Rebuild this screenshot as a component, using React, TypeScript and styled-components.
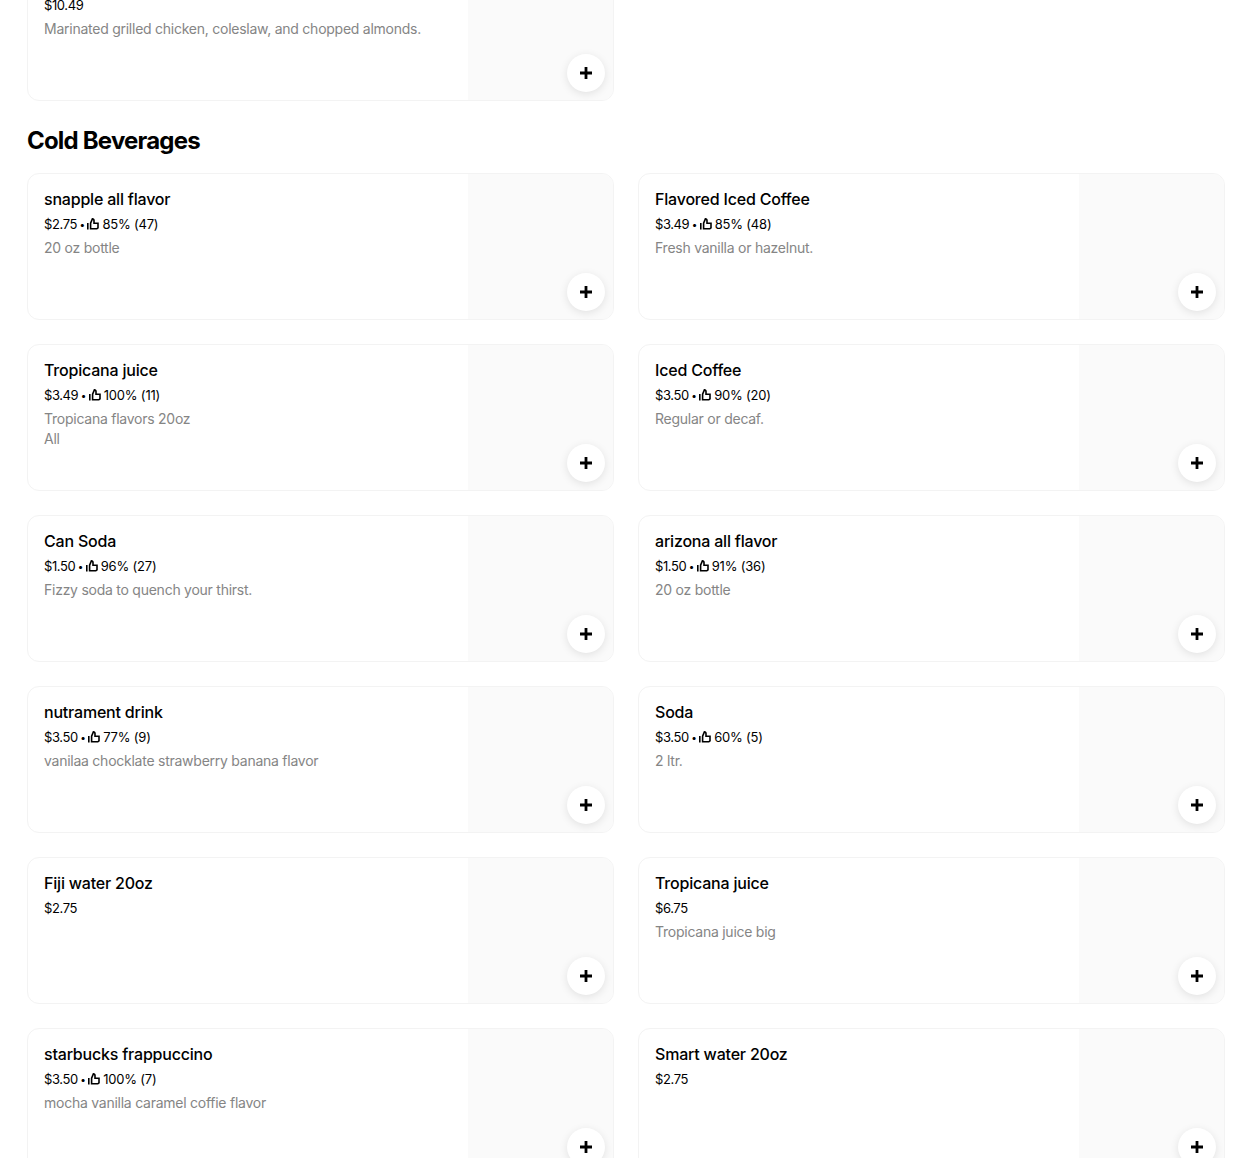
import styled, { createGlobalStyle } from 'styled-components';

type MenuItem = {
    name: string;
    price: string;
    rating?: string;
    description?: string[];
};

const COLD_BEVERAGES: MenuItem[] = [
    { name: 'snapple all flavor', price: '$2.75', rating: '85% (47)', description: ['20 oz bottle'] },
    { name: 'Flavored Iced Coffee', price: '$3.49', rating: '85% (48)', description: ['Fresh vanilla or hazelnut.'] },
    { name: 'Tropicana juice', price: '$3.49', rating: '100% (11)', description: ['Tropicana flavors 20oz', 'All'] },
    { name: 'Iced Coffee', price: '$3.50', rating: '90% (20)', description: ['Regular or decaf.'] },
    { name: 'Can Soda', price: '$1.50', rating: '96% (27)', description: ['Fizzy soda to quench your thirst.'] },
    { name: 'arizona all flavor', price: '$1.50', rating: '91% (36)', description: ['20 oz bottle'] },
    { name: 'nutrament drink', price: '$3.50', rating: '77% (9)', description: ['vanilaa chocklate strawberry banana flavor'] },
    { name: 'Soda', price: '$3.50', rating: '60% (5)', description: ['2 ltr.'] },
    { name: 'Fiji water 20oz', price: '$2.75' },
    { name: 'Tropicana juice', price: '$6.75', description: ['Tropicana juice big'] },
    { name: 'starbucks frappuccino', price: '$3.50', rating: '100% (7)', description: ['mocha vanilla caramel coffie flavor'] },
    { name: 'Smart water 20oz', price: '$2.75' },
];

const PREVIOUS_ITEM: MenuItem = {
    name: 'Grilled Chicken Salad',
    price: '$10.49',
    description: ['Marinated grilled chicken, coleslaw, and chopped almonds.'],
};

const GlobalStyle = createGlobalStyle`
    html, body {
        margin: 0;
        height: 1158px;
        overflow: hidden;
        background: #fff;
        font-family: Inter, "Liberation Sans", sans-serif;
    }
`;

/* page is scrolled, so the first card starts above the window */
const Page = styled.main`
    margin-top: -46px;
    padding: 0 25px 0 27px;
`;

const Grid = styled.div`
    display: grid;
    grid-template-columns: repeat(2, 587px);
    gap: 24px;
`;

const Heading = styled.h2`
    margin: 24px 0 16px;
    font-size: 24px;
    line-height: 32px;
    font-weight: 700;
    letter-spacing: -0.8px;
    color: #000;
`;

const Card = styled.article`
    display: flex;
    height: 147px;
    box-sizing: border-box;
    border: 1px solid #f3f3f3;
    border-radius: 12px;
    overflow: hidden;
`;

const Details = styled.div`
    flex: 1;
    min-width: 0;
    padding: 15px 16px 0;
`;

const Name = styled.div`
    font-size: 16px;
    line-height: 20px;
    font-weight: 500;
    letter-spacing: -0.2px;
    color: #000;
`;

const Meta = styled.div`
    display: flex;
    align-items: center;
    margin-top: 5px;
    font-size: 13px;
    line-height: 20px;
    letter-spacing: -0.2px;
    color: #000;
`;

const Price = styled.span`
    letter-spacing: -0.4px;
`;

const Dot = styled.span`
    margin: 0 2.5px;
    font-size: 10px;
`;

const ThumbIcon = styled.svg`
    width: 12px;
    height: 12px;
    margin-right: 3px;
`;

const Description = styled.div`
    margin-top: 4px;
    font-size: 14px;
    line-height: 20px;
    letter-spacing: -0.25px;
    color: #858585;
`;

const Thumb = styled.div`
    position: relative;
    flex: none;
    width: 145px;
    background: #fafafa;
`;

const AddButton = styled.button`
    position: absolute;
    right: 8px;
    bottom: 8px;
    display: flex;
    align-items: center;
    justify-content: center;
    width: 38px;
    height: 38px;
    padding: 0;
    border: 0;
    border-radius: 50%;
    background: #fff;
    box-shadow: 0 2px 8px rgba(0, 0, 0, 0.1);
    cursor: pointer;
`;

const PlusIcon = styled.svg`
    width: 14px;
    height: 14px;
`;

const ItemCard: React.FC<{ item: MenuItem }> = ({ item }) => {
    const { name, price, rating, description } = item;

    return (
        <Card>
            <Details>
                <Name>{name}</Name>
                <Meta>
                    <Price>{price}</Price>
                    {rating && (
                        <>
                            <Dot>•</Dot>
                            <ThumbIcon viewBox="0 0 12 12" fill="none" stroke="#000" strokeWidth="1.6">
                                <path d="M0.8 5v6.4M3.6 5.2v5.6h6.2l1.2-1V5.2H7V2.4C7 1.4 6.4.9 5.4.9L3.6 5.2Z" />
                            </ThumbIcon>
                            {rating}
                        </>
                    )}
                </Meta>
                {description && (
                    <Description>
                        {description.map((line) => (
                            <div key={line}>{line}</div>
                        ))}
                    </Description>
                )}
            </Details>
            <Thumb>
                <AddButton aria-label={`Add ${name}`}>
                    <PlusIcon viewBox="0 0 14 14" fill="#000">
                        <path d="M5.6 1h2.8v4.6H13v2.8H8.4V13H5.6V8.4H1V5.6h4.6V1Z" />
                    </PlusIcon>
                </AddButton>
            </Thumb>
        </Card>
    );
};

const App: React.FC = () => {
    return (
        <Page>
            <GlobalStyle />
            <Grid>
                <ItemCard item={PREVIOUS_ITEM} />
            </Grid>
            <Heading>Cold Beverages</Heading>
            <Grid>
                {COLD_BEVERAGES.map((item, i) => (
                    <ItemCard key={i} item={item} />
                ))}
            </Grid>
        </Page>
    );
};

export default App;
